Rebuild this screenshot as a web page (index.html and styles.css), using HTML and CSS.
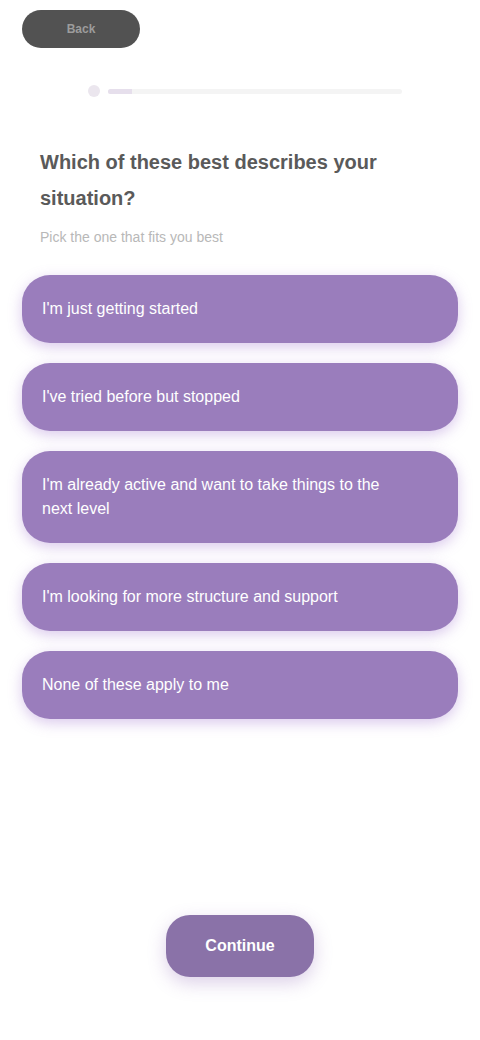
FILE: index.html
```html
<!DOCTYPE html>
<html lang="en">
<head>
<meta charset="utf-8">
<meta name="viewport" content="width=device-width, initial-scale=1">
<title>Quiz</title>
<link rel="stylesheet" href="styles.css">
</head>
<body>
<div class="screen">
  <header class="top">
    <button class="back-pill" type="button">Back</button>
  </header>
  <div class="progress">
    <span class="progress-dot"></span>
    <span class="progress-track"><span class="progress-fill" style="width: 8%"></span></span>
  </div>
  <section class="question">
    <h1 class="title">Which of these best describes your situation?</h1>
    <p class="subtitle">Pick the one that fits you best</p>
  </section>
  <ul class="options">
    <li class="option">I'm just getting started</li>
    <li class="option">I've tried before but stopped</li>
    <li class="option option-tall">I'm already active and want to take things to the next level</li>
    <li class="option">I'm looking for more structure and support</li>
    <li class="option">None of these apply to me</li>
  </ul>
  <div class="footer">
    <button class="next" type="button">Continue</button>
  </div>
</div>
</body>
</html>
```
FILE: styles.css
```css
* { box-sizing: border-box; }
html, body {
  margin: 0;
  padding: 0;
  background: #ffffff;
}
body {
  font-family: "Liberation Sans", Arial, sans-serif;
  color: #333;
}
.screen {
  width: 480px;
  height: 1040px;
  display: flex;
  flex-direction: column;
  padding: 10px 22px 0;
}
.top {
  display: flex;
}
.back-pill {
  width: 118px;
  height: 38px;
  border: none;
  border-radius: 19px;
  background: #525252;
  color: #9c9c9c;
  font-family: inherit;
  font-size: 12px;
  font-weight: 700;
}
.progress {
  display: flex;
  align-items: center;
  gap: 8px;
  margin-top: 36px;
  padding-left: 66px;
  width: 380px;
  height: 14px;
}
.progress-dot {
  width: 12px;
  height: 12px;
  border-radius: 50%;
  background: #ebe6ee;
  flex: none;
}
.progress-track {
  flex: 1;
  height: 5px;
  border-radius: 3px;
  background: #f4f4f4;
  overflow: hidden;
}
.progress-fill {
  display: block;
  height: 100%;
  background: #e6dfec;
}
.question {
  padding: 0 18px;
  margin-top: 46px;
}
.title {
  margin: 0;
  font-size: 20px;
  line-height: 36px;
  font-weight: 700;
  color: #5a5a5a;
}
.subtitle {
  margin: 11px 0 0;
  font-size: 14px;
  line-height: 20px;
  color: #b8b8b8;
}
.options {
  list-style: none;
  margin: 28px 0 0;
  padding: 0;
  display: flex;
  flex-direction: column;
  gap: 20px;
}
.option {
  min-height: 68px;
  display: flex;
  align-items: center;
  padding: 12px 20px;
  border-radius: 28px;
  background: #9a7dbc;
  color: #ffffff;
  font-size: 16px;
  line-height: 24px;
  box-shadow: 0 4px 14px rgba(150, 100, 200, 0.35);
}
.option-tall {
  min-height: 92px;
  padding-right: 60px;
}
.footer {
  display: flex;
  justify-content: center;
  margin-top: auto;
  padding-bottom: 63px;
}
.next {
  width: 148px;
  height: 62px;
  border: none;
  border-radius: 24px;
  background: #8a72a8;
  color: #ffffff;
  font-family: inherit;
  font-size: 16px;
  font-weight: 700;
  box-shadow: 0 6px 18px rgba(140, 100, 180, 0.3);
}
```
